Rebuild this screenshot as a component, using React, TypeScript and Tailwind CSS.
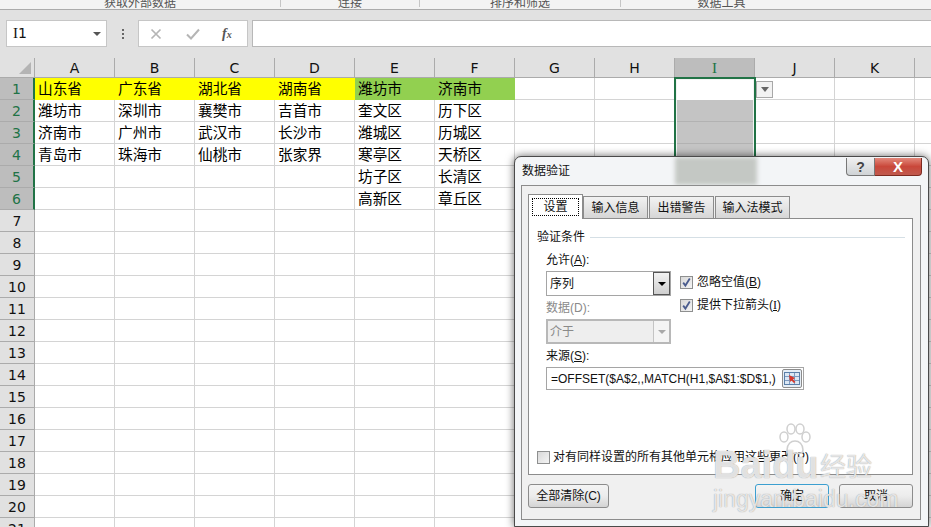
const colLetters = ["A", "B", "C", "D", "E", "F", "G", "H", "I", "J", "K", "L"];
const rowNumbers = Array.from({ length: 21 }, (_, i) => i + 1);

const sheet: Record<number, string[]> = {
  1: ["山东省", "广东省", "湖北省", "湖南省", "潍坊市", "济南市"],
  2: ["潍坊市", "深圳市", "襄樊市", "吉首市", "奎文区", "历下区"],
  3: ["济南市", "广州市", "武汉市", "长沙市", "潍城区", "历城区"],
  4: ["青岛市", "珠海市", "仙桃市", "张家界", "寒亭区", "天桥区"],
  5: ["", "", "", "", "坊子区", "长清区"],
  6: ["", "", "", "", "高新区", "章丘区"],
};

function cellClass(row: number, col: number) {
  if (row === 1 && col < 4) return "bg-[#ffff00]";
  if (row === 1 && col < 6) return "bg-[#92d050]";
  if (col === 8 && row === 1) return "bg-white";
  if (col === 8 && row <= 6) return "bg-[#c4c4c4] border-r border-b border-[#b2b2b2]";
  return "bg-white border-r border-b border-[#d4d4d4]";
}

function Grid() {
  return (
    <div className="relative grid grid-cols-[35px_repeat(12,80px)] grid-rows-[20px] auto-rows-[22px] w-[931px]">
      <div className="bg-[#e1e1e1] border-r border-b border-[#ababab] flex items-end justify-end pr-[3px] pb-[3px]">
        <svg width="12" height="12" viewBox="0 0 12 12">
          <path d="M12 0V12H0Z" fill="#b4b4b4" />
        </svg>
      </div>
      {colLetters.map((c) => (
        <div
          key={c}
          className={
            c === "I"
              ? "bg-[#bdbdbd] border-r border-b border-[#ababab] text-[#217346] text-center text-[15px] leading-[20px] font-['Liberation_Serif',serif]"
              : "bg-[#e1e1e1] border-r border-b border-[#ababab] text-[#111] text-center text-[14px] leading-[20px] font-['DejaVu_Sans',sans-serif]"
          }
        >
          {c}
        </div>
      ))}
      {rowNumbers.map((r) => (
        <div key={r} className="contents">
          <div
            className={
              r <= 6
                ? "bg-[#bdbdbd] border-r-2 border-r-[#217346] border-b border-b-[#ababab] text-[#217346] text-center text-[14px] leading-[22px] font-['DejaVu_Sans',sans-serif]"
                : "bg-[#e1e1e1] border-r border-r-[#ababab] border-b border-b-[#ababab] text-[#111] text-center text-[14px] leading-[22px] font-['DejaVu_Sans',sans-serif]"
            }
          >
            {r}
          </div>
          {colLetters.map((_, c) => (
            <div
              key={c}
              className={`${cellClass(r, c)} pl-[3px] text-[14.67px] leading-[22px] text-black whitespace-nowrap overflow-hidden`}
            >
              {sheet[r]?.[c] ?? ""}
            </div>
          ))}
        </div>
      ))}
      {/* selection box */}
      <div className="absolute left-[674px] top-[19px] w-[82px] h-[134px] border-2 border-[#217346] shadow-[inset_0_0_0_1px_#f4f4f4] pointer-events-none" />
      {/* validation dropdown arrow */}
      <div className="absolute left-[756px] top-[23px] w-[17px] h-[17px] bg-[#f2f2f2] border border-[#a8a8a8] flex items-center justify-center">
        <div className="w-0 h-0 border-x-[4px] border-x-transparent border-t-[5px] border-t-[#666]" />
      </div>
    </div>
  );
}

function Checkbox({ checked }: { checked?: boolean }) {
  return (
    <div className="w-[13px] h-[13px] shrink-0 border border-[#8e8f8f] bg-gradient-to-br from-[#d8d8d8] to-[#f4f4f4] flex items-center justify-center">
      {checked && (
        <svg width="11" height="11" viewBox="0 0 11 11">
          <path d="M2.2 5.6 4.4 8.6 8.8 1.6" fill="none" stroke="#4a5c8e" strokeWidth="1.8" />
        </svg>
      )}
    </div>
  );
}

function Tab({ label, active, width }: { label: string; active?: boolean; width: string }) {
  if (active) {
    return (
      <div className={`${width} h-[25px] -mb-px z-10 bg-white border border-b-0 border-[#8c8c8c] p-[3px]`}>
        <div className="h-full border border-dotted border-black flex items-center justify-center">{label}</div>
      </div>
    );
  }
  return (
    <div
      className={`${width} h-[22px] border border-b-0 border-[#8c8c8c] bg-gradient-to-b from-[#f2f2f2] to-[#d6d6d6] flex items-center justify-center`}
    >
      {label}
    </div>
  );
}

function DialogButton({ label, primary, width }: { label: string; primary?: boolean; width: string }) {
  return (
    <div
      className={`${width} h-[24px] rounded-[3px] border ${
        primary ? "border-[#3c9fd0]" : "border-[#8c8c8c]"
      } bg-gradient-to-b from-[#f4f4f4] via-[#ececec] to-[#d4d4d4] flex items-center justify-center`}
    >
      {label}
    </div>
  );
}

function Watermark() {
  return (
    <div className="absolute left-[198px] top-[266px] w-[180px] h-[90px] pointer-events-none text-white/75 [text-shadow:0_0_1px_#8a8a8a] font-['Liberation_Sans',sans-serif]">
      <svg className="absolute left-[64px] top-0" width="34" height="34" viewBox="0 0 34 34">
        <g fill="#ffffff" fillOpacity="0.5" stroke="#cfcfcf" strokeWidth="1.5">
          <ellipse cx="7" cy="14" rx="4" ry="5" />
          <ellipse cx="14" cy="6" rx="4" ry="5" />
          <ellipse cx="23" cy="6" rx="4" ry="5" />
          <ellipse cx="29" cy="14" rx="4" ry="5" />
          <path d="M10 27c0-6 4-9 8-9s8 3 8 9c0 4-5 4-8 3-3 1-8 1-8-3Z" />
        </g>
      </svg>
      <div className="absolute left-0 top-[20px] text-[38px] leading-[44px] font-bold">Baidu</div>
      <div className="absolute left-[107px] top-[26px] text-[26px] leading-[32px] font-['Noto_Sans_CJK_SC',sans-serif]">经验</div>
      <div className="absolute left-0 top-[62px] text-[23px] leading-[28px] whitespace-nowrap">jingyan.baidu.com</div>
    </div>
  );
}

function Dialog() {
  return (
    <div className="absolute left-[514px] top-[156px] w-[415px] h-[371px] overflow-hidden rounded-t-[7px] border border-[#4a4a4a] bg-[#f3f5f7] shadow-[0_0_8px_rgba(0,0,0,0.6)] px-[6px] text-[12px] leading-[16px] text-[#111] font-['Liberation_Sans','Noto_Sans_CJK_SC',sans-serif]">
      {/* glass frame shows the selected column behind it */}
      <div className="absolute left-[160px] top-0 w-[82px] h-[28px] bg-[#c4c8c4] blur-[2px]" />
      <div className="relative flex h-[28px] items-start justify-between">
        <span className="mt-[6px] ml-px">数据验证</span>
        <div className="flex mr-0 mt-px">
          <div className="w-[29px] h-[18px] rounded-bl-[4px] border border-[#777] border-t-0 bg-gradient-to-b from-[#f0f0f0] to-[#cfd3d6] flex items-center justify-center text-[14px] font-bold text-[#444]">
            ?
          </div>
          <div className="w-[47px] h-[18px] rounded-br-[4px] border border-l-0 border-t-0 border-[#7d2a20] bg-gradient-to-b from-[#e2887b] via-[#c9473a] to-[#c05a4e] flex items-center justify-center text-[15px] font-bold text-white leading-none">
            X
          </div>
        </div>
      </div>

      <div className="relative h-[335px] w-[400px] border border-[#8c8c8c] bg-[#f0f0f0] px-[6px] pt-[8px]">
        <div className="flex items-end">
          <Tab label="设置" active width="w-[55px]" />
          <Tab label="输入信息" width="w-[65px] mr-px" />
          <Tab label="出错警告" width="w-[65px] mr-px" />
          <Tab label="输入法模式" width="w-[75px]" />
        </div>

        <div className="relative h-[257px] w-[385px] border border-[#8c8c8c] bg-white px-[8px] pt-[10px]">
          <div className="flex items-center gap-[5px]">
            <span>验证条件</span>
            <div className="h-px flex-1 mr-[-1px] bg-[#d5dfe5]" />
          </div>

          <div className="ml-[9px] mt-[7px]">
            <div>
              允许(<span className="underline">A</span>):
            </div>
            <div className="flex mt-[3px]">
              <div className="w-[125px]">
                <div className="h-[25px] border border-[#a5a5a5] bg-white flex items-center justify-between pl-[3px]">
                  <span>序列</span>
                  <div className="w-[17px] h-[23px] border border-[#555] bg-gradient-to-b from-[#f2f2f2] to-[#cfcfcf] flex items-center justify-center">
                    <div className="w-0 h-0 border-x-[4px] border-x-transparent border-t-[4px] border-t-black" />
                  </div>
                </div>
                <div className="mt-[4px] text-[#8a8a8a]">数据(D):</div>
                <div className="mt-[3px] h-[25px] border-2 border-[#b8b8b8] bg-[#eeeeee] text-[#8a8a8a] flex items-center justify-between pl-[2px]">
                  <span>介于</span>
                  <div className="w-[16px] h-full bg-[#f4f4f4] border-l border-[#c4c4c4] flex items-center justify-center">
                    <div className="w-0 h-0 border-x-[4px] border-x-transparent border-t-[4px] border-t-[#a8a8a8]" />
                  </div>
                </div>
              </div>
              <div className="ml-[9px] pt-[4px]">
                <div className="flex items-center gap-[4px] h-[14px]">
                  <Checkbox checked />
                  <span className="whitespace-nowrap">
                    忽略空值(<span className="underline">B</span>)
                  </span>
                </div>
                <div className="flex items-center gap-[4px] h-[14px] mt-[9px]">
                  <Checkbox checked />
                  <span className="whitespace-nowrap">
                    提供下拉箭头(<span className="underline font-['Liberation_Serif',serif]">I</span>)
                  </span>
                </div>
              </div>
            </div>

            <div className="mt-[4px]">
              来源(<span className="underline">S</span>):
            </div>
            <div className="mt-[3px] w-[258px] h-[23px] border border-[#a5a5a5] bg-white flex items-center justify-between pl-[4px] pr-px">
              <span className="text-[12px] whitespace-nowrap">=OFFSET($A$2,,MATCH(H1,$A$1:$D$1,)</span>
              <div className="w-[20px] h-[19px] rounded-[2px] border border-[#8c8c8c] bg-[#e6eef6] flex items-center justify-center">
                <svg width="16" height="13" viewBox="0 0 16 13">
                  <rect x="0.5" y="0.5" width="15" height="12" fill="#dbe7f4" stroke="#5b7fa8" />
                  <path d="M1 4.5H15M1 8.5H15M5.5 1V12M10.5 1V12" stroke="#7d9cc0" />
                  <path d="M5 3 11 6 9 7.5 11.5 10 10 11 7.5 8.5 6 10Z" fill="#d8382c" />
                </svg>
              </div>
            </div>
          </div>

          <div className="absolute left-[8px] top-[230px] flex items-center gap-[3px]">
            <Checkbox />
            <span className="whitespace-nowrap">对有同样设置的所有其他单元格应用这些更改(P)</span>
          </div>
        </div>

        <div className="flex mt-[9px] gap-[10px]">
          <DialogButton label="全部清除(C)" width="w-[81px] mr-[136px]" />
          <DialogButton label="确定" primary width="w-[74px]" />
          <DialogButton label="取消" width="w-[74px]" />
        </div>
      </div>
      <Watermark />
    </div>
  );
}

export default function App() {
  return (
    <div className="relative w-[931px] h-[527px] overflow-hidden bg-white font-['Liberation_Sans','Noto_Sans_CJK_SC',sans-serif]">
      {/* ribbon group labels, mostly cut off by the crop */}
      <div className="flex h-[10px] overflow-hidden bg-[#f3f3f3] border-b border-[#ababab] text-[12px] leading-[8px] text-[#555]">
        <div className="w-[281px] h-[8px] border-r border-[#c6c6c6] text-center -mt-[1px]">获取外部数据</div>
        <div className="w-[139px] h-[8px] border-r border-[#c6c6c6] text-center -mt-[1px]">连接</div>
        <div className="w-[201px] h-[8px] border-r border-[#c6c6c6] text-center -mt-[1px]">排序和筛选</div>
        <div className="w-[201px] h-[8px] text-center -mt-[1px]">数据工具</div>
      </div>

      {/* formula bar */}
      <div className="flex h-[48px] items-start bg-[#e1e1e1] pt-[10px] pl-[6px]">
        <div className="w-[101px] h-[27px] bg-white border border-[#c6c6c6] flex items-center justify-between pl-[6px] pr-[5px] text-[14px] text-[#111] font-['DejaVu_Sans',sans-serif]">
          <span>
            <span className="text-[15px] font-['Liberation_Serif',serif]">I</span>1
          </span>
          <div className="w-0 h-0 border-x-[4px] border-x-transparent border-t-[4px] border-t-[#555]" />
        </div>
        <div className="w-[31px] h-[27px] flex flex-col items-center justify-center gap-[2px]">
          <div className="w-[2px] h-[2px] bg-[#666]" />
          <div className="w-[2px] h-[2px] bg-[#666]" />
          <div className="w-[2px] h-[2px] bg-[#666]" />
        </div>
        <div className="w-[110px] h-[27px] bg-white border border-[#c6c6c6] flex items-center">
          <svg className="ml-[11px]" width="12" height="12" viewBox="0 0 12 12">
            <path d="M1.5 1.5 10.5 10.5M10.5 1.5 1.5 10.5" stroke="#b5b5b5" strokeWidth="1.7" fill="none" />
          </svg>
          <svg className="ml-[24px]" width="14" height="12" viewBox="0 0 14 12">
            <path d="M1 6.5 5 10.5 13 1.5" stroke="#b5b5b5" strokeWidth="2" fill="none" />
          </svg>
          <span className="ml-[22px] text-[14px] italic font-bold text-[#555] font-['Liberation_Serif',serif]">
            f<span className="text-[10px]">x</span>
          </span>
        </div>
        <div className="ml-[4px] flex-1 h-[27px] bg-white border border-[#b8b8b8] border-r-0" />
      </div>

      <Grid />
      <Dialog />
    </div>
  );
}
